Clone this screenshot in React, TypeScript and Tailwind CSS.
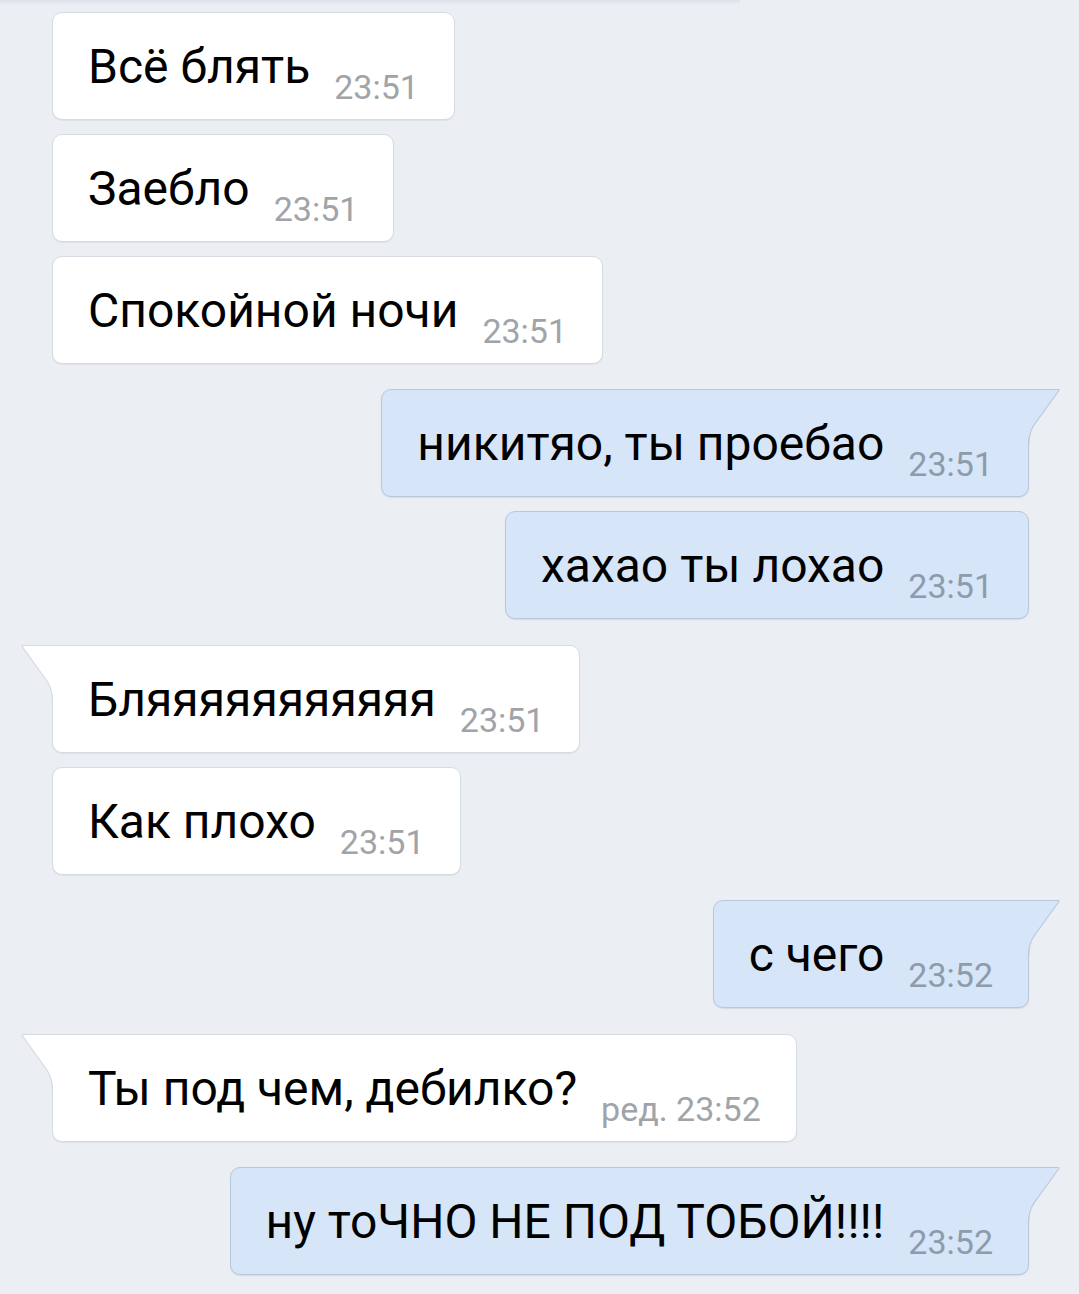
import React from "react";

type Msg = {
  text: string;
  time: string;
  out?: boolean;
  tail?: boolean;
  mt: string;
};

const msgs: Msg[] = [
  { text: "Всё блять", time: "23:51", mt: "mt-[12px]" },
  { text: "Заебло", time: "23:51", mt: "mt-[14px]" },
  { text: "Спокойной ночи", time: "23:51", mt: "mt-[14px]" },
  { text: "никитяо, ты проебао", time: "23:51", out: true, tail: true, mt: "mt-[25px]" },
  { text: "хахао ты лохао", time: "23:51", out: true, mt: "mt-[14px]" },
  { text: "Бляяяяяяяяяяя", time: "23:51", tail: true, mt: "mt-[26px]" },
  { text: "Как плохо", time: "23:51", mt: "mt-[14px]" },
  { text: "с чего", time: "23:52", out: true, tail: true, mt: "mt-[25px]" },
  { text: "Ты под чем, дебилко?", time: "ред. 23:52", tail: true, mt: "mt-[26px]" },
  { text: "ну тоЧНО НЕ ПОД ТОБОЙ!!!!", time: "23:52", out: true, tail: true, mt: "mt-[25px]" },
];

function Tail({ out }: { out?: boolean }) {
  const fill = out ? "#d6e5f7" : "#ffffff";
  const stroke = out ? "#b8c8dc" : "#d6dbe1";
  return (
    <svg
      width="36"
      height="58"
      viewBox="0 0 36 58"
      className={out ? "absolute top-[-1px] right-[-32px]" : "absolute top-[-1px] left-[-32px]"}
    >
      <g transform={out ? "translate(36,0) scale(-1,1)" : undefined}>
        <path
          d="M1.5,0.5 L36,0.5 L36,58 L31.5,58 L31.5,52 Q31.5,44 26,36 Z"
          fill={fill}
        />
        <path
          d="M36,0.5 L2,0.5 Q0.5,0.6 1.4,2 L26,36 Q31.5,44 31.5,58"
          fill="none"
          stroke={stroke}
          strokeWidth="1.2"
          strokeLinejoin="round"
        />
      </g>
    </svg>
  );
}

function Bubble({ m }: { m: Msg }) {
  const base =
    "relative h-[108px] flex items-start pt-[30px] pl-[35px] pr-[35px] rounded-[10px] border";
  const color = m.out
    ? "bg-[#d6e5f7] border-[#b8c8dc] shadow-[0_1px_1px_rgba(60,80,110,0.12)]"
    : "bg-white border-[#d6dbe1] shadow-[0_1px_1px_rgba(0,0,0,0.06)]";
  const corner = m.tail ? (m.out ? "rounded-tr-none" : "rounded-tl-none") : "";
  return (
    <div className={`${m.mt} flex ${m.out ? "justify-end pr-[50px]" : "justify-start pl-[52px]"}`}>
      <div className={`${base} ${color} ${corner}`}>
        {m.tail && <Tail out={m.out} />}
        <span className="relative text-[48px] leading-[48px] text-black whitespace-nowrap">
          {m.text}
        </span>
        <span
          className={`relative ml-[24px] mt-[27px] text-[34px] leading-[34px] whitespace-nowrap ${
            m.out ? "text-[#8d9bab]" : "text-[#a0a4a9]"
          }`}
        >
          {m.time}
        </span>
      </div>
    </div>
  );
}

export default function App() {
  return (
    <div
      className="relative w-[1079px] h-[1294px] overflow-hidden bg-[#ebeef3]"
      style={{ fontFamily: "Roboto, 'Noto Sans', sans-serif" }}
    >
      <div className="absolute top-0 left-0 w-[740px] h-[5px] bg-gradient-to-b from-[#dde2ea] to-transparent" />
      <div className="flex flex-col">
        {msgs.map((m, i) => (
          <Bubble key={i} m={m} />
        ))}
      </div>
    </div>
  );
}
